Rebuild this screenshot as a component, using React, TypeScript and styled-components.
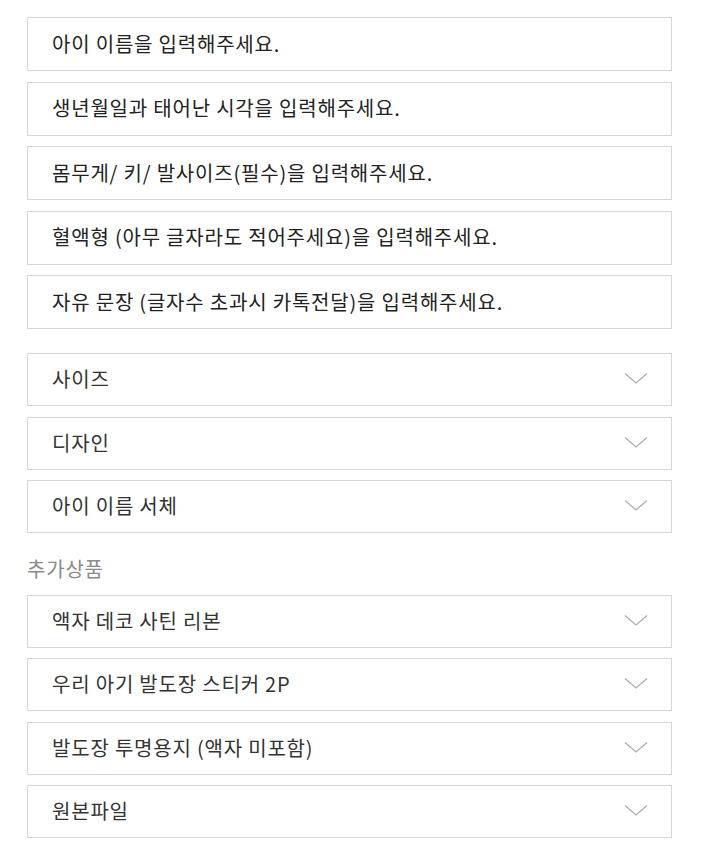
import React from 'react';
import styled, { createGlobalStyle } from 'styled-components';

const GlobalStyle = createGlobalStyle`
  body {
    margin: 0;
    background: #fff;
    font-family: "Noto Sans CJK KR", "Noto Sans", "Liberation Sans", sans-serif;
  }
`;

const inputs = [
  '아이 이름을 입력해주세요.',
  '생년월일과 태어난 시각을 입력해주세요.',
  '몸무게/ 키/ 발사이즈(필수)을 입력해주세요.',
  '혈액형 (아무 글자라도 적어주세요)을 입력해주세요.',
  '자유 문장 (글자수 초과시 카톡전달)을 입력해주세요.',
];

const options = ['사이즈', '디자인', '아이 이름 서체'];

const extras = [
  '액자 데코 사틴 리본',
  '우리 아기 발도장 스티커 2P',
  '발도장 투명용지 (액자 미포함)',
  '원본파일',
];

const Chevron = () => (
  <svg width="24" height="13" viewBox="0 0 24 13" fill="none">
    <path d="M1 1.5L12 11L23 1.5" stroke="#a9adb5" strokeWidth="1.3" />
  </svg>
);

const App = () => {
  return (
    <>
      <GlobalStyle />
      <Page>
        <Group $gap={10.5}>
          {inputs.map((t) => (
            <Field key={t}>{t}</Field>
          ))}
        </Group>
        <Group $gap={10.5} style={{ marginTop: 24 }}>
          {options.map((t) => (
            <Select key={t}>
              <span>{t}</span>
              <Chevron />
            </Select>
          ))}
        </Group>
        <SectionLabel>추가상품</SectionLabel>
        <Group $gap={10.3}>
          {extras.map((t) => (
            <Select key={t}>
              <span>{t}</span>
              <Chevron />
            </Select>
          ))}
        </Group>
      </Page>
    </>
  );
};

export default App;

const Page = styled.div`
  width: 645px;
  padding: 17px 0 0 27px;
`;

const Group = styled.div<{ $gap: number }>`
  display: flex;
  flex-direction: column;
  gap: ${(p) => p.$gap}px;
`;

const Field = styled.div`
  box-sizing: border-box;
  height: 54px;
  border: 1px solid #d6d6d6;
  padding: 0 24px 2px;
  display: flex;
  align-items: center;
  font-size: 20px;
  color: #222;
  letter-spacing: 0.8px;
`;

const Select = styled(Field)`
  height: 53px;
  justify-content: space-between;
  padding-right: 23px;
  color: #333;
`;

const SectionLabel = styled.div`
  box-sizing: border-box;
  height: 62px;
  padding-top: 8px;
  display: flex;
  align-items: center;
  font-size: 20px;
  color: #8a8a8a;
  letter-spacing: 0.8px;
`;
